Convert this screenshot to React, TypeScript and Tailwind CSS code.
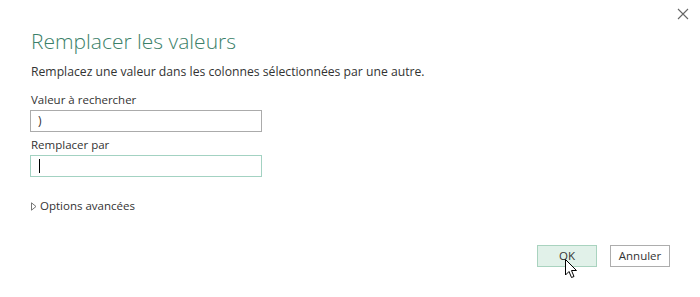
import React from 'react';

// Dialog: "Remplacer les valeurs"
export default function App() {
  return (
    <div
      className="relative w-[700px] h-[297px] bg-white text-[#333333] overflow-hidden"
      style={{ fontFamily: '"Segoe UI", "Open Sans", "Noto Sans", sans-serif' }}
    >
      {/* Close button */}
      <button className="absolute top-[3px] right-[6px] w-[22px] h-[22px] flex items-center justify-center text-[#666666]">
        <svg width="12" height="12" viewBox="0 0 12 12" fill="none" stroke="currentColor" strokeWidth="1.1">
          <path d="M1 1 L11 11 M11 1 L1 11" />
        </svg>
      </button>

      <div className="flex flex-col pl-[30px] pt-[27px]">
        <h1 className="text-[21px] leading-[28px] font-light text-[#3b7f69] pl-[1px]">
          Remplacer les valeurs
        </h1>
        <p className="mt-[8px] text-[12.2px] leading-[18px] pl-[1px]">
          Remplacez une valeur dans les colonnes sélectionnées par une autre.
        </p>

        <label className="mt-[10px] text-[11.5px] leading-[18px] pl-[1px]">Valeur à rechercher</label>
        <div className="mt-[1px] w-[232px] h-[22px] border border-[#ababab] flex items-center px-[7px] text-[12px]">
          )
        </div>

        <label className="mt-[4px] text-[11.5px] leading-[18px] pl-[1px]">Remplacer par</label>
        <div className="mt-[1px] w-[232px] h-[22px] border border-[#a3d2c2] flex items-center px-[8px]">
          <div className="w-[1px] h-[14px] bg-black" />
        </div>

        <div className="mt-[20px] flex items-center gap-[3px] text-[11.5px] leading-[18px] pl-[1px]">
          <svg width="6" height="9" viewBox="0 0 6 9" fill="none" stroke="#666666" strokeWidth="0.9">
            <path d="M0.5 0.8 L5 4.5 L0.5 8.2 Z" />
          </svg>
          <span>Options avancées</span>
        </div>
      </div>

      {/* Footer buttons */}
      <div className="absolute right-[30px] top-[245px] flex gap-[13px]">
        <button className="w-[60px] h-[22px] border border-[#a9d3bf] bg-[#e1f1e9] text-[11.5px] text-[#333333]">
          OK
        </button>
        <button className="w-[60px] h-[22px] border border-[#adadad] bg-white text-[11.5px] text-[#333333]">
          Annuler
        </button>
      </div>

      {/* Mouse cursor */}
      <svg className="absolute left-[565px] top-[259px]" width="13" height="20" viewBox="0 0 13 20">
        <path d="M0.5 0.5 L0.5 16 L4 12.5 L6.5 18.5 L9 17.5 L6.5 11.5 L11.5 11.5 Z" fill="white" stroke="black" strokeWidth="1" strokeLinejoin="round" />
      </svg>
    </div>
  );
}
